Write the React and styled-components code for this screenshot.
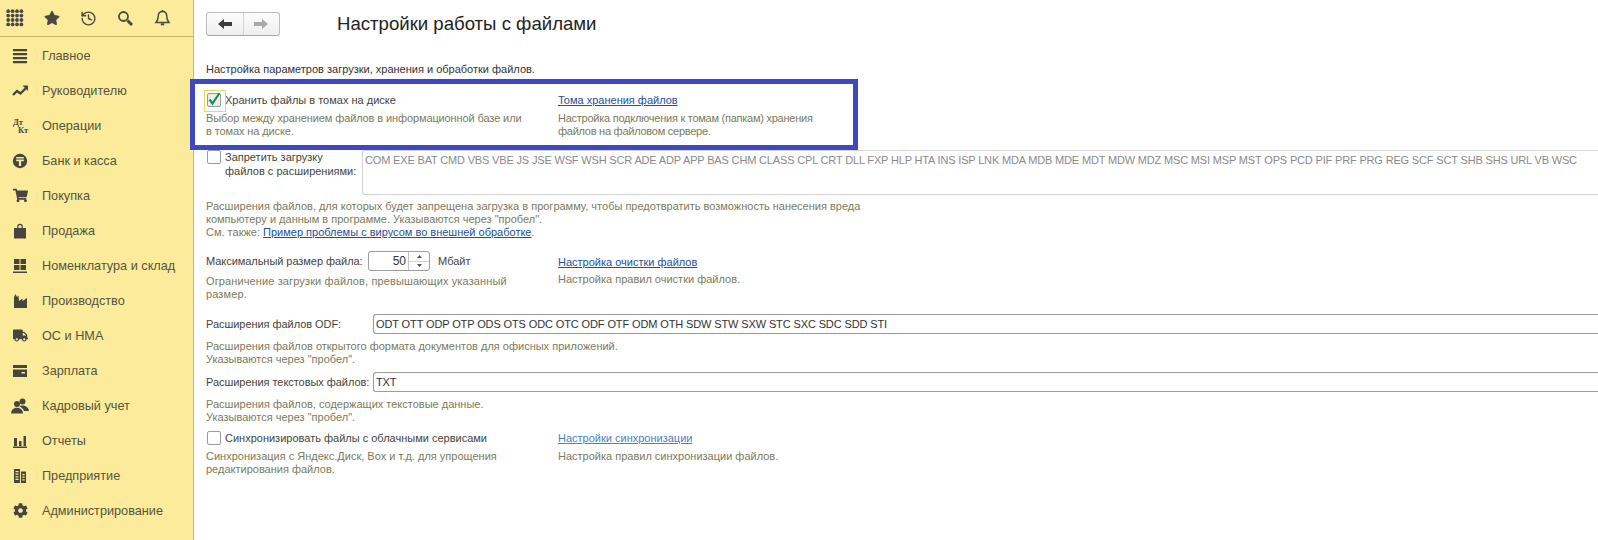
import React from "react";
import styled, { createGlobalStyle } from "styled-components";
import { History } from "lucide-react";
import { FaStar, FaShoppingCart, FaTruck, FaCog } from "react-icons/fa";

const GlobalStyle = createGlobalStyle`
  html, body {
    margin: 0;
    padding: 0;
    background: #fff;
    overflow: hidden;
  }
  body {
    font-family: "Liberation Sans", Arial, sans-serif;
    font-size: 11px;
    color: #4a4a40;
  }
`;

const Page = styled.div`
  display: flex;
  width: 1598px;
  height: 540px;
  overflow: hidden;
`;

const Sidebar = styled.aside`
  flex: none;
  width: 193px;
  background: #fbeb9b;
  border-right: 1px solid #c9bb6a;
`;

const TopIcons = styled.div`
  display: flex;
  align-items: center;
  height: 36px;
  padding-left: 6px;
  gap: 20px;
  border-bottom: 1px solid #c9b95e;
  color: #4a4a44;
  font-size: 16px;
`;

const MenuList = styled.ul`
  list-style: none;
  margin: 0;
  padding: 1px 0 0;
`;

const MenuItem = styled.li`
  display: flex;
  align-items: center;
  height: 35px;
  font-size: 12.7px;
  color: #55553f;
`;

const MenuIcon = styled.span`
  display: flex;
  align-items: center;
  justify-content: center;
  flex: none;
  width: 18px;
  margin: 0 13px 0 11px;
  color: #46463e;
  font-size: 15px;
`;

const Main = styled.main`
  position: relative;
  flex: 1;
  min-width: 0;
  padding: 12px 0 0 8px;
`;

const Header = styled.header`
  display: flex;
  align-items: center;
  height: 24px;
  margin-left: 4px;
`;

const NavGroup = styled.div`
  display: flex;
  width: 74px;
  height: 24px;
  box-sizing: border-box;
  border: 1px solid #bdbdbd;
  border-bottom-color: #a8a8a8;
  border-radius: 3px;
  background: linear-gradient(#fdfdfd, #eeeeee);
`;

const NavButton = styled.div`
  flex: 1;
  display: flex;
  align-items: center;
  justify-content: center;
  color: ${(props) => (props.disabled ? "#a9a9a9" : "#3c3c3c")};
  & + & {
    border-left: 1px solid #d4d4d4;
  }
`;

const Title = styled.h1`
  margin: 0 0 0 57px;
  font-size: 18.6px;
  font-weight: 400;
  color: #222;
`;

const Intro = styled.p`
  margin: 26px 0 0 4px;
  line-height: 14px;
  color: #333;
`;

const Row = styled.div`
  display: grid;
  grid-template-columns: 356px 1fr;
  margin-top: ${(props) => props.$top || 0}px;
`;

const Cell = styled.div`
  min-width: 0;
  padding-top: ${(props) => props.$pad || 0}px;
`;

const CheckLine = styled.div`
  display: flex;
  align-items: flex-start;
  line-height: 14px;
  white-space: nowrap;
  color: #45453c;
`;

const CheckBox = styled.span`
  position: relative;
  flex: none;
  box-sizing: border-box;
  width: 14px;
  height: 14px;
  margin: 0 4px 0 5px;
  border: 1px solid #9a9a9a;
  border-radius: 2px;
  background: ${(props) => (props.$focused ? "#ececec" : "#fff")};
  display: flex;
  align-items: center;
  justify-content: center;
`;

const FocusRing = styled.span`
  position: absolute;
  left: -4px;
  top: -4px;
  width: 20px;
  height: 20px;
  border: 1px solid #e6d964;
`;

const Hint = styled.p`
  margin: ${(props) => props.$top || 0}px 0 0 ${(props) => props.$left ?? 4}px;
  line-height: 13px;
  letter-spacing: ${(props) => props.$track || 0}px;
  color: #7b7b5c;
  white-space: nowrap;
`;

const ActionLink = styled.a`
  display: block;
  line-height: 14px;
  color: ${(props) => (props.$light ? "#4a80c4" : "#1e4f9e")};
  text-decoration: underline;
`;

const InlineLink = styled.a`
  color: #1e4f9e;
  text-decoration: underline;
`;

const FieldRow = styled.div`
  display: flex;
  align-items: center;
  margin: ${(props) => props.$top || 0}px 0 0 4px;
  color: #45453c;
`;

const FieldLabel = styled.span`
  flex: none;
  width: ${(props) => props.$width}px;
  white-space: nowrap;
  letter-spacing: -0.05px;
`;

const TextField = styled.div`
  flex: 1;
  box-sizing: border-box;
  height: 20px;
  margin-right: -10px;
  padding-left: 2px;
  border: 1px solid #9c9c9c;
  border-right: none;
  border-radius: 3px 0 0 3px;
  line-height: 18px;
  letter-spacing: -0.12px;
  white-space: nowrap;
  color: #333;
`;

const BlockedRow = styled.div`
  display: flex;
  margin-top: 12px;
`;

const BlockedLabel = styled.div`
  flex: none;
  width: 160px;
`;

const ExtArea = styled.div`
  flex: 1;
  box-sizing: border-box;
  height: 45px;
  margin-right: -10px;
  padding: 1px 0 0 2px;
  border: 1px solid #d4d4d4;
  border-right: none;
  border-radius: 3px 0 0 3px;
  line-height: 16px;
  letter-spacing: -0.165px;
  white-space: nowrap;
  color: #8a8a8a;
`;

const Spinner = styled.div`
  display: flex;
  flex: none;
  box-sizing: border-box;
  width: 62px;
  height: 20px;
  border: 1px solid #9c9c9c;
  border-radius: 3px;
  font-size: 12px;
  color: #333;
`;

const SpinValue = styled.span`
  flex: 1;
  padding-right: 2px;
  line-height: 18px;
  text-align: right;
`;

const SpinButtons = styled.span`
  display: flex;
  flex-direction: column;
  width: 20px;
  border-left: 1px solid #c4c4c4;
`;

const SpinArrow = styled.span`
  flex: 1;
  display: flex;
  align-items: center;
  justify-content: center;
  & + & {
    border-top: 1px solid #d2d2d2;
  }
`;

const Unit = styled.span`
  margin-left: 8px;
`;

const Highlight = styled.div`
  position: absolute;
  left: -4px;
  top: 79px;
  box-sizing: border-box;
  width: 668px;
  height: 71px;
  border: 5px solid #3f48c0;
  pointer-events: none;
`;

const Glyph = ({ children }) => (
  <svg width="18" height="16" viewBox="0 0 18 16" fill="currentColor">
    {children}
  </svg>
);

const AppsIcon = () => (
  <svg width="18" height="18" viewBox="0 0 18 18" fill="currentColor">
    {[2.2, 6.6, 11, 15.4].flatMap((y) =>
      [2.2, 6.6, 11, 15.4].map((x) => <circle key={`${x}-${y}`} cx={x} cy={y} r="1.9" />)
    )}
  </svg>
);

const SearchIcon = () => (
  <svg width="17" height="17" viewBox="0 0 17 17" fill="none" stroke="currentColor">
    <circle cx="6.500" cy="6.500" r="4.500" strokeWidth="1.800" />
    <path d="M10.500 10.500L15 15" strokeWidth="3" />
  </svg>
);

const BellIcon = () => (
  <svg width="17" height="18" viewBox="0 0 17 18" fill="none" stroke="currentColor" strokeWidth="1.500">
    <path d="M8.500 2.500c-3 0-4.300 2.200-4.300 5 0 3-1 4.500-2.200 6h13c-1.200-1.500-2.200-3-2.200-6 0-2.800-1.300-5-4.300-5z" />
    <path d="M8.500 1v1.500" />
    <path d="M6.800 15.300h3.400" strokeWidth="2" />
  </svg>
);

const BackArrow = () => (
  <svg width="14" height="10" viewBox="0 0 14 10" fill="currentColor">
    <path d="M0 5l6-5v3h8v4H6v3z" />
  </svg>
);

const ForwardArrow = () => (
  <svg width="14" height="10" viewBox="0 0 14 10" fill="currentColor">
    <path d="M14 5L8 0v3H0v4h8v3z" />
  </svg>
);

const ListIcon = () => (
  <Glyph>
    <path d="M2 1h14v2.200H2zM2 5h14v2.200H2zM2 9h14v2.200H2zM2 13h14v2.200H2z" />
  </Glyph>
);

const TrendIcon = () => (
  <Glyph>
    <path d="M2 12l4-4 3.500 2.500L15 5" fill="none" stroke="currentColor" strokeWidth="2.400" />
    <path d="M11.500 2.500H17V8z" />
  </Glyph>
);

const DebitCreditIcon = () => (
  <svg width="18" height="18" viewBox="0 0 18 18" fill="currentColor">
    <text x="2" y="8" fontSize="8.500" fontWeight="700" fontFamily="Liberation Serif, serif">Дт</text>
    <text x="7" y="16" fontSize="8.500" fontWeight="700" fontFamily="Liberation Serif, serif">Кт</text>
  </svg>
);

const CoinIcon = () => (
  <svg width="18" height="18" viewBox="0 0 18 18">
    <circle cx="9" cy="9" r="7.200" fill="currentColor" />
    <path d="M5.200 5h7.600v1.600H5.200zM5.200 7.600h7.600v1.600h-2.700V14H7.900V9.200H5.200z" fill="#fbeb9b" />
  </svg>
);

const BagIcon = () => (
  <Glyph>
    <path d="M3 5h3.200V3.500a2.800 2.800 0 0 1 5.600 0V5H15v10.500H3zM7.400 5h3.200V3.500a1.600 1.600 0 0 0-3.200 0z" />
  </Glyph>
);

const BoxesIcon = () => (
  <Glyph>
    <path d="M3 1h5.500v5H3zM9.500 1H15v5H9.500zM3 7h5.500v5H3zM9.500 7H15v5H9.500zM2 13.500h14V15H2z" />
  </Glyph>
);

const FactoryIcon = () => (
  <Glyph>
    <path d="M3 15V4l1.500-3 1.500 3 1.500-1.500L8 8l3.500-2.500V8L16 5v10z" />
  </Glyph>
);

const CardIcon = () => (
  <Glyph>
    <path d="M2 2h14v3H2zM2 6.500h14V14H2zM10.500 9v1.500H14V9z" fillRule="evenodd" />
  </Glyph>
);

const PeopleIcon = () => (
  <svg width="18" height="16" viewBox="0 0 18 16" fill="currentColor">
    <circle cx="11.500" cy="3.500" r="3" />
    <path d="M8.500 8.500c1-1.300 5-1.300 6.500 0 1.500.8 2.500 2 3 4.500h-5c-.5-2-2.500-3.500-4.500-4.500z" />
    <circle cx="6" cy="6" r="3" />
    <path d="M0 15.500c.3-3 1.500-4.500 3.500-5.300 1.500-.6 3.500-.6 5 0 2 .8 3.200 2.300 3.500 5.300z" />
  </svg>
);

const BarsIcon = () => (
  <Glyph>
    <path d="M3 5h3v8H3zM8 8h2.500v5H8zM12.500 3H15v10h-2.500zM2 13.500h14V15H2z" />
  </Glyph>
);

const BuildingIcon = () => (
  <Glyph>
    <path
      d="M3 1h6v14H3zM10 3.500h5V15h-5zM4.500 3v1.200h3V3zM4.500 5.600v1.200h3V5.600zM4.500 8.200v1.200h3V8.200zM4.500 10.800V12h3v-1.200zM11.300 6v1.200h2.400V6zM11.300 8.600v1.200h2.400V8.600zM11.300 11.200v1.200h2.400v-1.200z"
      fillRule="evenodd"
    />
  </Glyph>
);

const TickIcon = () => (
  <svg width="14" height="14" viewBox="0 0 14 14" style={{ overflow: "visible" }}>
    <path d="M2.500 6.500l3 4L12.500 0" fill="none" stroke="#12935a" strokeWidth="2.200" />
  </svg>
);

const menu = [
  ["Главное", <ListIcon />],
  ["Руководителю", <TrendIcon />],
  ["Операции", <DebitCreditIcon />],
  ["Банк и касса", <CoinIcon />],
  ["Покупка", <FaShoppingCart />],
  ["Продажа", <BagIcon />],
  ["Номенклатура и склад", <BoxesIcon />],
  ["Производство", <FactoryIcon />],
  ["ОС и НМА", <FaTruck />],
  ["Зарплата", <CardIcon />],
  ["Кадровый учет", <PeopleIcon />],
  ["Отчеты", <BarsIcon />],
  ["Предприятие", <BuildingIcon />],
  ["Администрирование", <FaCog />],
];

const blockedExt =
  "COM EXE BAT CMD VBS VBE JS JSE WSF WSH SCR ADE ADP APP BAS CHM CLASS CPL CRT DLL FXP HLP HTA INS ISP LNK MDA MDB MDE MDT MDW MDZ MSC MSI MSP MST OPS PCD PIF PRF PRG REG SCF SCT SHB SHS URL VB WSC";
const odfExt =
  "ODT OTT ODP OTP ODS OTS ODC OTC ODF OTF ODM OTH SDW STW SXW STC SXC SDC SDD STI";

export default function App() {
  return (
    <Page>
      <GlobalStyle />
      <Sidebar>
        <TopIcons>
          <AppsIcon />
          <FaStar />
          <History size={17} strokeWidth={2} />
          <SearchIcon />
          <BellIcon />
        </TopIcons>
        <MenuList>
          {menu.map(([label, icon]) => (
            <MenuItem key={label}>
              <MenuIcon>{icon}</MenuIcon>
              {label}
            </MenuItem>
          ))}
        </MenuList>
      </Sidebar>
      <Main>
        <Header>
          <NavGroup>
            <NavButton>
              <BackArrow />
            </NavButton>
            <NavButton disabled>
              <ForwardArrow />
            </NavButton>
          </NavGroup>
          <Title>Настройки работы с файлами</Title>
        </Header>
        <Intro>Настройка параметров загрузки, хранения и обработки файлов.</Intro>

        <Row $top={17}>
          <Cell>
            <CheckLine>
              <CheckBox $focused>
                <FocusRing />
                <TickIcon />
              </CheckBox>
              Хранить файлы в томах на диске
            </CheckLine>
            <Hint $top={5} $track={-0.11}>
              Выбор между хранением файлов в информационной базе или
              <br />в томах на диске.
            </Hint>
          </Cell>
          <Cell>
            <ActionLink>Тома хранения файлов</ActionLink>
            <Hint $top={5} $left={0} $track={-0.25}>
              Настройка подключения к томам (папкам) хранения
              <br />
              файлов на файловом сервере.
            </Hint>
          </Cell>
        </Row>

        <BlockedRow>
          <BlockedLabel>
            <CheckLine>
              <CheckBox />
              <span>
                Запретить загрузку
                <br />
                файлов с расширениями:
              </span>
            </CheckLine>
          </BlockedLabel>
          <ExtArea>{blockedExt}</ExtArea>
        </BlockedRow>
        <Hint $top={5}>
          Расширения файлов, для которых будет запрещена загрузка в программу, чтобы предотвратить возможность нанесения вреда
          <br />
          компьютеру и данным в программе. Указываются через "пробел".
          <br />
          См. также: <InlineLink>Пример проблемы с вирусом во внешней обработке</InlineLink>.
        </Hint>

        <Row $top={12}>
          <Cell>
            <FieldRow>
              <FieldLabel $width={162}>Максимальный размер файла:</FieldLabel>
              <Spinner>
                <SpinValue>50</SpinValue>
                <SpinButtons>
                  <SpinArrow>
                    <svg width="5" height="3" viewBox="0 0 5 3">
                      <path d="M0 3l2.500-3L5 3z" fill="#555" />
                    </svg>
                  </SpinArrow>
                  <SpinArrow>
                    <svg width="5" height="3" viewBox="0 0 5 3">
                      <path d="M0 0l2.500 3L5 0z" fill="#555" />
                    </svg>
                  </SpinArrow>
                </SpinButtons>
              </Spinner>
              <Unit>Мбайт</Unit>
            </FieldRow>
            <Hint $top={4} $track={0.12}>
              Ограничение загрузки файлов, превышающих указанный
              <br />
              размер.
            </Hint>
          </Cell>
          <Cell $pad={4}>
            <ActionLink>Настройка очистки файлов</ActionLink>
            <Hint $top={4} $left={0}>
              Настройка правил очистки файлов.
            </Hint>
          </Cell>
        </Row>

        <FieldRow $top={13}>
          <FieldLabel $width={167}>Расширения файлов ODF:</FieldLabel>
          <TextField>{odfExt}</TextField>
        </FieldRow>
        <Hint $top={6}>
          Расширения файлов открытого формата документов для офисных приложений.
          <br />
          Указываются через "пробел".
        </Hint>

        <FieldRow $top={6}>
          <FieldLabel $width={167}>Расширения текстовых файлов:</FieldLabel>
          <TextField>TXT</TextField>
        </FieldRow>
        <Hint $top={6}>
          Расширения файлов, содержащих текстовые данные.
          <br />
          Указываются через "пробел".
        </Hint>

        <Row $top={7}>
          <Cell>
            <CheckLine>
              <CheckBox />
              Синхронизировать файлы с облачными сервисами
            </CheckLine>
            <Hint $top={5}>
              Синхронизация с Яндекс.Диск, Box и т.д. для упрощения
              <br />
              редактирования файлов.
            </Hint>
          </Cell>
          <Cell>
            <ActionLink $light>Настройки синхронизации</ActionLink>
            <Hint $top={5} $left={0}>
              Настройка правил синхронизации файлов.
            </Hint>
          </Cell>
        </Row>
        <Highlight />
      </Main>
    </Page>
  );
}
